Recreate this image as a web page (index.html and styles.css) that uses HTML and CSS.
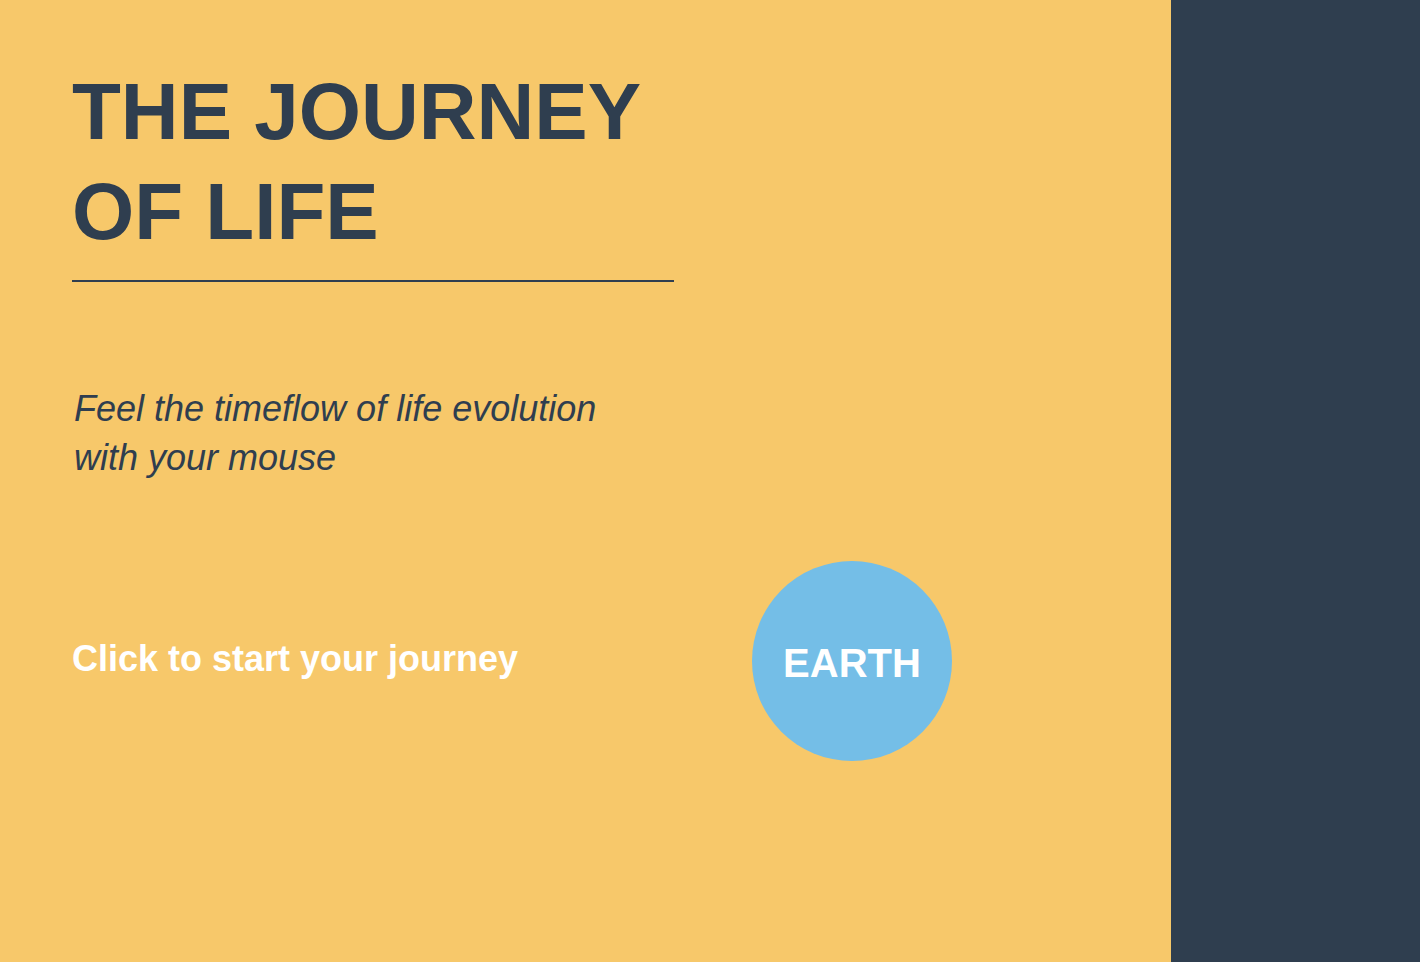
FILE: index.html
```html
<!DOCTYPE html>
<html lang="en">
<head>
<meta charset="utf-8">
<title>The Journey of Life</title>
<link rel="stylesheet" href="styles.css">
</head>
<body>
<div class="page">
  <main class="main">
    <h1 class="title">THE JOURNEY<br>OF LIFE</h1>
    <p class="subtitle">Feel the timeflow of life evolution<br>with your mouse</p>
    <div class="start-row">
      <p class="cta">Click to start your journey</p>
      <div class="planet"><span class="planet-label">EARTH</span></div>
    </div>
  </main>
  <aside class="side"></aside>
</div>
</body>
</html>
```

FILE: styles.css
```css
html, body {
  margin: 0;
  padding: 0;
  height: 100%;
}

body {
  font-family: "Liberation Sans", Arial, Helvetica, sans-serif;
  background: #F7C86A;
}

.page {
  display: flex;
  height: 962px;
  overflow: hidden;
}

.main {
  flex: 0 0 1171px;
  background: #F7C86A;
  padding: 62px 0 0 72px;
  box-sizing: border-box;
  color: #2F3E4F;
}

.side {
  flex: 1 1 auto;
  background: #2F3E4F;
}

.title {
  margin: 0;
  width: 602px;
  font-size: 80px;
  line-height: 100px;
  font-weight: 700;
  padding-bottom: 18px;
  border-bottom: 2px solid #2F3E4F;
}

.subtitle {
  margin: 103px 0 0 0;
  padding-left: 2px;
  font-size: 36px;
  line-height: 48.6px;
  font-style: italic;
  font-weight: 400;
}

.start-row {
  display: flex;
  align-items: flex-start;
  margin-top: 79px;
}

.cta {
  width: 680px;
  margin: 77px 0 0 0;
  font-size: 36px;
  line-height: 41.4px;
  font-weight: 700;
  color: #FFFFFF;
}

.planet {
  width: 200px;
  height: 200px;
  border-radius: 50%;
  background: #74BEE7;
  display: flex;
  align-items: center;
  justify-content: center;
}

.planet-label {
  color: #FFFFFF;
  font-size: 40px;
  font-weight: 700;
  padding-top: 5px;
}
```
